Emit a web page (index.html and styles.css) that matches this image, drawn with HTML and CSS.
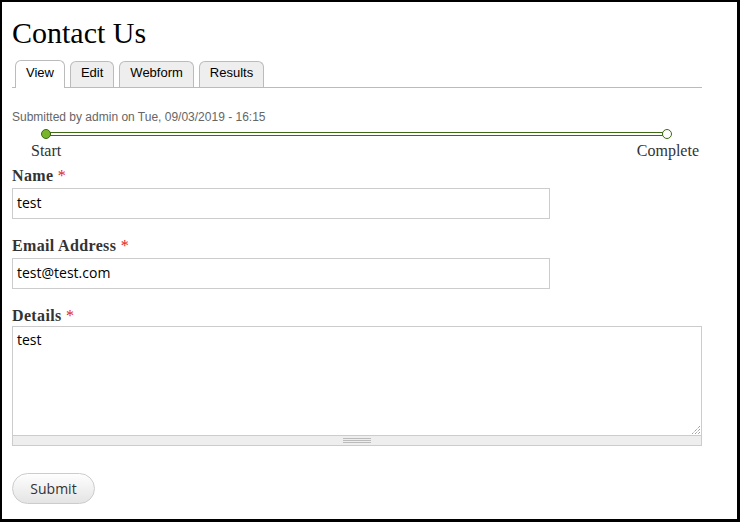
FILE: index.html
```html
<!DOCTYPE html>
<html>
<head>
<meta charset="utf-8">
<link rel="stylesheet" href="styles.css">
</head>
<body>
<div class="frame">
  <h1 class="title">Contact Us</h1>
  <ul class="tabs">
    <li class="tab active">View</li>
    <li class="tab">Edit</li>
    <li class="tab">Webform</li>
    <li class="tab">Results</li>
  </ul>
  <p class="submitted">Submitted by admin on Tue, 09/03/2019 - 16:15</p>
  <div class="progress">
    <div class="track">
      <span class="dot done"></span>
      <span class="bar"></span>
      <span class="dot"></span>
    </div>
    <div class="steps">
      <span>Start</span>
      <span>Complete</span>
    </div>
  </div>
  <form class="form">
    <div class="field">
      <label class="label">Name <span class="req">*</span></label>
      <div class="input short">test</div>
    </div>
    <div class="field">
      <label class="label">Email Address <span class="req">*</span></label>
      <div class="input short">test@test.com</div>
    </div>
    <div class="field">
      <label class="label">Details <span class="req">*</span></label>
      <div class="textarea">test
        <svg class="resize" width="8" height="8" viewBox="0 0 8 8"><path d="M8 0L0 8M8 3L3 8M8 6L6 8" stroke="#777" stroke-width="1" stroke-dasharray="1 1"/></svg>
      </div>
      <div class="grippie"><span class="grip"></span></div>
    </div>
    <div class="actions">
      <span class="button">Submit</span>
    </div>
  </form>
</div>
</body>
</html>
```

FILE: styles.css
```css
* { box-sizing: border-box; }
html, body { margin: 0; padding: 0; background: #fff; }
.frame {
  width: 740px;
  height: 522px;
  border-style: solid;
  border-color: #000;
  border-width: 2px 3px 3px 2px;
  padding: 13px 0 0 10px;
  font-family: "Liberation Serif", serif;
  color: #333;
  overflow: hidden;
}
.title {
  margin: 0;
  font-family: "Liberation Serif", serif;
  font-weight: normal;
  font-size: 30px;
  line-height: 36px;
  color: #000;
}
.tabs {
  list-style: none;
  margin: 9px 0 0 0;
  padding: 0 0 0 3px;
  width: 690px;
  display: flex;
  gap: 5px;
  border-bottom: 1px solid #bbb;
  height: 28px;
}
.tab {
  font-family: "Liberation Sans", Arial, sans-serif;
  font-size: 13px;
  color: #000;
  background: #eee;
  border: 1px solid #bbb;
  border-bottom: none;
  border-radius: 6px 6px 0 0;
  padding: 0 10px;
  height: 26px;
  line-height: 22px;
  margin-top: 1px;
}
.tab.active {
  background: #fff;
  height: 28px;
  margin-top: 0;
  line-height: 24px;
}
.submitted {
  margin: 22px 0 0 0;
  font-family: "Liberation Sans", Arial, sans-serif;
  font-size: 12px;
  line-height: 14px;
  color: #666;
}
.progress {
  width: 690px;
  margin-top: 4px;
}
.track {
  display: flex;
  align-items: center;
  margin-left: 29px;
  width: 631px;
  height: 11px;
}
.dot {
  width: 10px;
  height: 10px;
  border-radius: 50%;
  border: 1px solid #3f6a13;
  background: #fff;
  flex: none;
}
.dot.done { background: #79b52c; }
.bar {
  flex: 1;
  height: 4px;
  border: 1px solid #3f6a13;
  background: #fff;
  margin: 0 -1px;
}
.steps {
  display: flex;
  justify-content: space-between;
  margin-left: 19px;
  width: 668px;
  font-size: 16px;
  line-height: 18px;
  margin-top: 3px;
}
.form { margin-top: 7px; }
.field { margin-bottom: 18px; }
.label {
  display: block;
  font-weight: bold;
  font-size: 16px;
  line-height: 18px;
  letter-spacing: 0.35px;
  color: #333;
  margin-bottom: 3px;
}
.req { color: #d22; font-weight: normal; }
.input {
  width: 538px;
  height: 31px;
  border: 1px solid #ccc;
  padding: 0 4px;
  font-family: "Open Sans", sans-serif;
  font-size: 14px;
  line-height: 28px;
  color: #000;
}
.field:nth-child(3) .label { margin-bottom: 1px; }
.textarea {
  position: relative;
  width: 690px;
  height: 109px;
  border: 1px solid #ccc;
  border-bottom: none;
  padding: 2px 4px;
  font-family: "Open Sans", sans-serif;
  font-size: 14px;
  line-height: 22px;
  color: #000;
}
.resize { position: absolute; right: 1px; bottom: 1px; }
.grippie {
  width: 690px;
  height: 11px;
  background: #eee;
  border: 1px solid #ccc;
  display: flex;
  justify-content: center;
  align-items: center;
}
.grip {
  width: 28px;
  height: 5px;
  border-top: 1px solid #bbb;
  border-bottom: 1px solid #bbb;
  position: relative;
}
.grip::after {
  content: "";
  display: block;
  border-top: 1px solid #bbb;
  margin-top: 1px;
}
.actions { margin-top: 27px; }
.button {
  display: inline-block;
  width: 83px;
  height: 31px;
  border: 1px solid #ccc;
  border-radius: 16px;
  background: linear-gradient(#fefefe, #e4e4e4);
  font-family: "Open Sans", sans-serif;
  font-size: 14px;
  line-height: 29px;
  text-align: center;
  color: #333;
}
```
